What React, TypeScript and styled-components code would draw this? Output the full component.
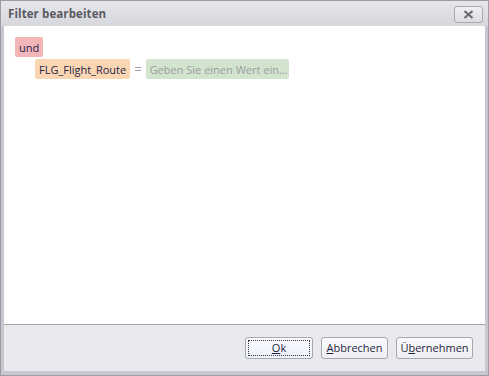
import React from "react";
import styled, { createGlobalStyle } from "styled-components";

const GlobalStyle = createGlobalStyle`
  html, body {
    margin: 0;
    padding: 0;
    width: 489px;
    height: 376px;
    overflow: hidden;
    background: #bfc0c8;
  }
  * { box-sizing: border-box; }
`;

const Window = styled.div`
  width: 489px;
  height: 376px;
  display: flex;
  flex-direction: column;
  background: #c7c8cf;
  border: 1px solid #9c9ca6;
  font-family: "Open Sans", "Noto Sans", "DejaVu Sans", sans-serif;
`;

const TitleBar = styled.div`
  height: 25px;
  display: flex;
  align-items: center;
  justify-content: space-between;
  padding: 0 5px 0 7px;
  background: linear-gradient(#e6e7eb, #d6d7dc);
`;

const Title = styled.span`
  font-size: 11.5px;
  font-weight: 700;
  color: #5a5a62;
  letter-spacing: 0.1px;
`;

const CloseButton = styled.button`
  width: 29px;
  height: 17px;
  margin-top: 1px;
  padding: 0;
  display: flex;
  align-items: center;
  justify-content: center;
  border: 1px solid #a9aab2;
  border-radius: 3px;
  background: linear-gradient(#f0f0f3, #dcdde2);
`;

const Body = styled.div`
  flex: 1;
  display: flex;
  flex-direction: column;
  margin: 0 3px 4px 3px;
`;

const Editor = styled.div`
  flex: 1;
  background: #ffffff;
  border-bottom: 1px solid #a3a4ad;
  padding: 11px 0 0 11px;
  display: flex;
  flex-direction: column;
  gap: 2px;
`;

const Row = styled.div<{ $indent?: number }>`
  display: flex;
  align-items: center;
  gap: 3px;
  padding-left: ${({ $indent }) => $indent ?? 0}px;
`;

const Chip = styled.span<{ $bg: string; $fg: string }>`
  display: inline-flex;
  align-items: center;
  height: 20px;
  padding: 0 4px;
  border-radius: 2px;
  background: ${({ $bg }) => $bg};
  color: ${({ $fg }) => $fg};
  font-size: 11px;
  white-space: nowrap;
`;

const Operator = styled.span`
  color: #9a9aa2;
  font-size: 13px;
  padding: 0 1px;
`;

const Footer = styled.div`
  height: 46px;
  background: #e9eaee;
  display: flex;
  align-items: center;
  justify-content: flex-end;
  gap: 8px;
  padding: 0 12px 1px 0;
`;

const DialogButton = styled.button<{ $width: number; $focused?: boolean }>`
  width: ${({ $width }) => $width}px;
  height: 22px;
  padding: 0;
  border: 1px solid #a6a7b0;
  border-radius: 3px;
  background: ${({ $focused }) =>
    $focused ? "linear-gradient(#fbfbff, #eef0fb)" : "linear-gradient(#fafafb, #eeeff2)"};
  font-family: inherit;
  font-size: 11px;
  color: #1f1f3f;
  position: relative;
  display: flex;
  align-items: center;
  justify-content: center;

  u {
    text-decoration: underline;
    text-underline-offset: 1px;
  }
`;

const FocusRing = styled.span`
  position: absolute;
  inset: 2px;
  border: 1px dotted #333340;
  pointer-events: none;
`;

export default function App() {
  return (
    <>
      <GlobalStyle />
      <Window>
        <TitleBar>
          <Title>Filter bearbeiten</Title>
          <CloseButton aria-label="Schließen">
            <svg width="11" height="9" viewBox="0 0 11 9">
              <path d="M1.5 1 L9.5 8 M9.5 1 L1.5 8" stroke="#6b6b74" strokeWidth="2.2" />
            </svg>
          </CloseButton>
        </TitleBar>
        <Body>
          <Editor>
            <Row>
              <Chip $bg="#f2b6b9" $fg="#1e1e4a">und</Chip>
            </Row>
            <Row $indent={20}>
              <Chip $bg="#fad7b2" $fg="#1e1e4a">FLG_Flight_Route</Chip>
              <Operator>=</Operator>
              <Chip $bg="#d2e4cd" $fg="#9c9ca0" style={{ width: 143 }}>
                Geben Sie einen Wert ein…
              </Chip>
            </Row>
          </Editor>
          <Footer>
            <DialogButton $width={68} $focused>
              <FocusRing />
              <u>O</u>k
            </DialogButton>
            <DialogButton $width={67}>
              <u>A</u>bbrechen
            </DialogButton>
            <DialogButton $width={77}>
              Ü<u>b</u>ernehmen
            </DialogButton>
          </Footer>
        </Body>
      </Window>
    </>
  );
}
